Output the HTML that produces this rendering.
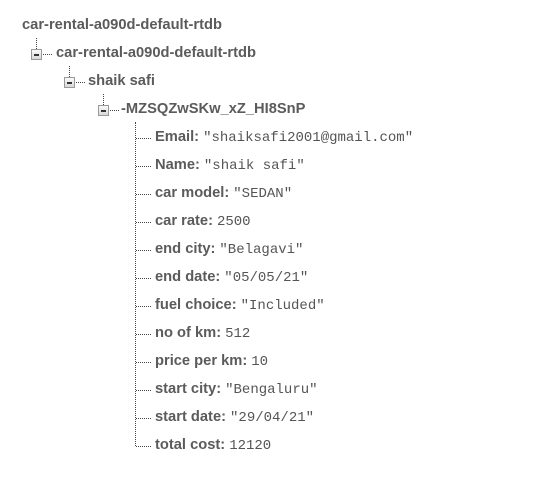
<!DOCTYPE html><html><head><style>
body{margin:0;width:535px;height:484px;background:#fff;position:relative;overflow:hidden;font-family:"Liberation Sans",sans-serif}
.t{position:absolute;font-size:14.7px;font-weight:bold;color:#5b5b5b;line-height:16px;white-space:nowrap}
.v{font-family:"Liberation Mono",monospace;font-weight:normal;color:#555;font-size:14px;margin-left:4px}
.b{position:absolute;width:9px;height:9px;border:1px solid #9a9a9a;background:linear-gradient(#fafafa,#d8d8d8);box-sizing:content-box}
.b:after{content:"";position:absolute;left:2px;top:4px;width:5px;height:2px;background:#333}
.vl{position:absolute;border-left:1px dotted #444;width:0}
.hl{position:absolute;border-top:1px dotted #444;height:0}
</style></head><body>
<div class="t" style="left:22px;top:17px">car-rental-a090d-default-rtdb</div>
<div class="vl" style="left:36px;top:38px;height:11px"></div>
<div class="b" style="left:31px;top:49px"></div>
<div class="hl" style="left:43px;top:54px;width:9px"></div>
<div class="t" style="left:56px;top:45px">car-rental-a090d-default-rtdb</div>
<div class="vl" style="left:69px;top:66px;height:11px"></div>
<div class="b" style="left:64px;top:77px"></div>
<div class="hl" style="left:76px;top:82px;width:9px"></div>
<div class="t" style="left:88px;top:73px">shaik safi</div>
<div class="vl" style="left:103px;top:94px;height:11px"></div>
<div class="b" style="left:98px;top:105px"></div>
<div class="hl" style="left:110px;top:110px;width:9px"></div>
<div class="t" style="left:121px;top:101px">-MZSQZwSKw_xZ_HI8SnP</div>
<div class="vl" style="left:135px;top:122px;height:324px"></div>
<div class="hl" style="left:136px;top:138px;width:15px"></div><div class="t" style="left:155px;top:129px">Email:<span class="v">"shaiksafi2001@gmail.com"</span></div>
<div class="hl" style="left:136px;top:166px;width:15px"></div><div class="t" style="left:155px;top:157px">Name:<span class="v">"shaik safi"</span></div>
<div class="hl" style="left:136px;top:194px;width:15px"></div><div class="t" style="left:155px;top:185px">car model:<span class="v">"SEDAN"</span></div>
<div class="hl" style="left:136px;top:222px;width:15px"></div><div class="t" style="left:155px;top:213px">car rate:<span class="v">2500</span></div>
<div class="hl" style="left:136px;top:250px;width:15px"></div><div class="t" style="left:155px;top:241px">end city:<span class="v">"Belagavi"</span></div>
<div class="hl" style="left:136px;top:278px;width:15px"></div><div class="t" style="left:155px;top:269px">end date:<span class="v">"05/05/21"</span></div>
<div class="hl" style="left:136px;top:306px;width:15px"></div><div class="t" style="left:155px;top:297px">fuel choice:<span class="v">"Included"</span></div>
<div class="hl" style="left:136px;top:334px;width:15px"></div><div class="t" style="left:155px;top:325px">no of km:<span class="v">512</span></div>
<div class="hl" style="left:136px;top:362px;width:15px"></div><div class="t" style="left:155px;top:353px">price per km:<span class="v">10</span></div>
<div class="hl" style="left:136px;top:390px;width:15px"></div><div class="t" style="left:155px;top:381px">start city:<span class="v">"Bengaluru"</span></div>
<div class="hl" style="left:136px;top:418px;width:15px"></div><div class="t" style="left:155px;top:409px">start date:<span class="v">"29/04/21"</span></div>
<div class="hl" style="left:136px;top:446px;width:15px"></div><div class="t" style="left:155px;top:437px">total cost:<span class="v">12120</span></div>
</body></html>
